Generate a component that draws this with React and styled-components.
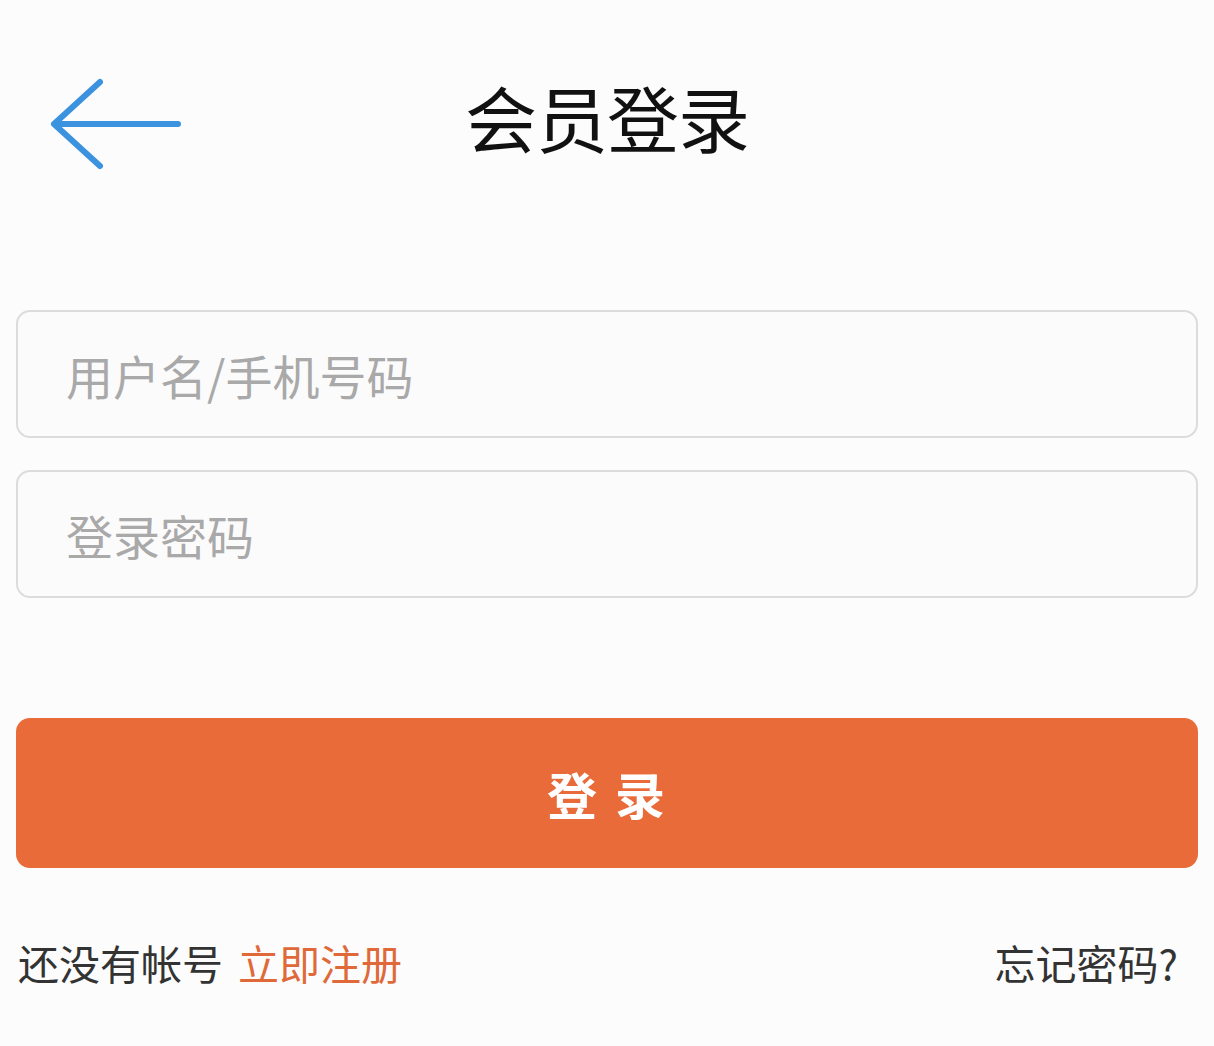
import React from "react";
import styled, { createGlobalStyle } from "styled-components";

const GlobalStyle = createGlobalStyle`
  html, body {
    margin: 0;
    padding: 0;
    background: #fcfcfc;
  }
  body {
    font-family: "Noto Sans CJK SC", "Noto Sans", sans-serif;
  }
`;

const Page = styled.div`
  width: 1214px;
  height: 1046px;
  background: #fcfcfc;
  box-sizing: border-box;
  padding: 0 16px;
  display: flex;
  flex-direction: column;
`;

const Header = styled.div`
  height: 244px;
  position: relative;
  display: flex;
  justify-content: center;
  align-items: flex-start;
  padding-top: 68px;
  box-sizing: border-box;
`;

const BackButton = styled.button`
  position: absolute;
  left: 16px;
  top: 76px;
  width: 150px;
  height: 96px;
  border: none;
  background: none;
  padding: 0;
  cursor: pointer;
`;

const Title = styled.h1`
  margin: 0;
  font-size: 72px;
  font-weight: 400;
  color: #111;
  letter-spacing: -1px;
  line-height: 96px;
`;

const Form = styled.div`
  margin-top: 66px;
  display: flex;
  flex-direction: column;
  gap: 32px;
`;

const Input = styled.input`
  height: 128px;
  box-sizing: border-box;
  border: 2px solid #dcdbdd;
  border-radius: 14px;
  background: #fcfbfc;
  padding: 0 48px;
  font-family: "Noto Sans CJK SC", sans-serif;
  font-size: 47px;
  color: #333;
  outline: none;

  &::placeholder {
    color: #a9a9a9;
  }
`;

const SubmitButton = styled.button`
  margin-top: 120px;
  height: 150px;
  border: none;
  border-radius: 14px;
  background: #e86b39;
  color: #fff;
  font-family: "Noto Sans CJK SC", sans-serif;
  font-size: 50px;
  font-weight: 700;
  letter-spacing: 18px;
  padding-left: 22px;
  cursor: pointer;
`;

const Footer = styled.div`
  margin-top: 64px;
  display: flex;
  justify-content: space-between;
  align-items: center;
  padding: 0 20px 0 2px;
  font-size: 41px;
  line-height: 60px;
  color: #333;
`;

const Link = styled.a`
  color: ${(p) => (p.$accent ? "#e0693a" : "#333")};
  text-decoration: none;
  margin-left: ${(p) => (p.$accent ? "15px" : "0")};
`;

export default function App() {
  return (
    <>
      <GlobalStyle />
      <Page>
        <Header>
          <BackButton aria-label="back">
            <svg width="150" height="96" viewBox="0 0 150 96" fill="none">
              <path
                d="M146 48H22M68 6L22 48L68 90"
                stroke="#3b93df"
                strokeWidth="6"
                strokeLinecap="round"
                strokeLinejoin="round"
              />
            </svg>
          </BackButton>
          <Title>会员登录</Title>
        </Header>
        <Form>
          <Input placeholder="用户名/手机号码" />
          <Input type="password" placeholder="登录密码" />
        </Form>
        <SubmitButton>登录</SubmitButton>
        <Footer>
          <span>
            还没有帐号<Link $accent href="#">立即注册</Link>
          </span>
          <Link href="#">忘记密码?</Link>
        </Footer>
      </Page>
    </>
  );
}
